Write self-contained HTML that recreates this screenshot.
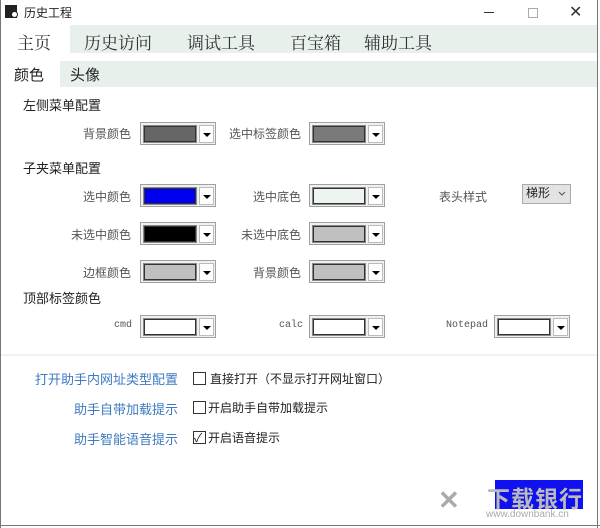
<!DOCTYPE html>
<html><head><meta charset="utf-8"><style>
*{margin:0;padding:0;box-sizing:border-box}
body{width:600px;height:528px;background:#fff;font-family:"Liberation Sans","Noto Sans CJK SC",sans-serif;position:relative;overflow:hidden;color:#222}
.a{position:absolute;white-space:nowrap}
.tb{font-family:"Noto Serif CJK SC","Liberation Serif",serif;font-size:17px;color:#333}
.lbl{font-size:12px;color:#555;text-align:right}
.cb{position:absolute;width:76px;height:23px;border:1px solid #a0a0a0;background:#f0f0f0}
.cb .sw{position:absolute;left:3px;top:3px;width:52px;height:16px;border:1px solid #333;outline:1px solid #888}
.cb .ar{position:absolute;left:58px;top:2px;width:15px;height:18px;background:#fff;border:1px solid #bbb}
.cb .ar:after{content:"";position:absolute;left:3px;top:7px;border-left:4px solid transparent;border-right:4px solid transparent;border-top:4px solid #000}
.sec{font-size:13px;color:#222}
.blue{font-size:13px;color:#3d7ac0;text-align:right;width:170px}
.chk{position:absolute;width:13px;height:13px;border:1px solid #333;background:#fff}
.mono{font-family:"Liberation Mono",monospace;font-size:10px;color:#555}
</style></head><body>
<div class="a" style="left:0;top:0;width:1px;height:528px;background:#777"></div>
<div class="a" style="left:597px;top:0;width:1px;height:528px;background:#777"></div>
<div class="a" style="left:0;top:525px;width:600px;height:1px;background:#777"></div>
<div class="a" style="left:5px;top:5px;width:12px;height:13px;background:#222"></div>
<div class="a" style="left:11px;top:11px;width:7px;height:7px;border-radius:50%;background:#fff;border:1.5px solid #222"></div>
<div class="a" style="left:24px;top:4px;font-size:12px;color:#222">历史工程</div>
<div class="a" style="left:484px;top:12px;width:10px;height:1px;background:#333"></div>
<div class="a" style="left:528px;top:8px;width:10px;height:10px;border:1px solid #aaa"></div>
<div class="a" style="left:569px;top:2px;font-size:16px;color:#333">✕</div>
<div class="a" style="left:1px;top:25px;width:596px;height:28px;background:#e8f0ec"></div>
<div class="a" style="left:1px;top:25px;width:69px;height:28px;background:#fff"></div>
<div class="a tb" style="left:17px;top:29px">主页</div>
<div class="a tb" style="left:84px;top:29px">历史访问</div>
<div class="a tb" style="left:187px;top:29px">调试工具</div>
<div class="a tb" style="left:290px;top:29px">百宝箱</div>
<div class="a tb" style="left:364px;top:29px">辅助工具</div>
<div class="a" style="left:1px;top:61px;width:596px;height:26px;background:#e8f0ec"></div>
<div class="a" style="left:1px;top:61px;width:59px;height:26px;background:#fff"></div>
<div class="a" style="left:14px;top:64px;font-size:15px;color:#222">颜色</div>
<div class="a" style="left:70px;top:64px;font-size:15px;color:#222">头像</div>
<div class="a sec" style="left:23px;top:95px">左侧菜单配置</div>
<div class="a sec" style="left:23px;top:158px">子夹菜单配置</div>
<div class="a sec" style="left:23px;top:288px">顶部标签颜色</div>

<div class="a lbl" style="left:30px;width:101px;top:125px">背景颜色</div>
<div class="cb" style="left:140px;top:122px"><div class="sw" style="background:#666"></div><div class="ar"></div></div>
<div class="a lbl" style="left:200px;width:101px;top:125px">选中标签颜色</div>
<div class="cb" style="left:309px;top:122px"><div class="sw" style="background:#7a7a7a"></div><div class="ar"></div></div>

<div class="a lbl" style="left:30px;width:101px;top:188px">选中颜色</div>
<div class="cb" style="left:140px;top:184px"><div class="sw" style="background:#0000f0"></div><div class="ar"></div></div>
<div class="a lbl" style="left:200px;width:101px;top:188px">选中底色</div>
<div class="cb" style="left:309px;top:184px"><div class="sw" style="background:#eef5f1"></div><div class="ar"></div></div>
<div class="a lbl" style="left:430px;width:57px;top:188px">表头样式</div>
<div class="a" style="left:522px;top:184px;width:49px;height:20px;background:#e3e3e3;border:1px solid #aaa;font-size:12px;padding-left:3px;line-height:17px">梯形</div>
<svg class="a" style="left:558px;top:191px" width="8" height="6"><path d="M1 1 L4 4 L7 1" fill="none" stroke="#555" stroke-width="1"/></svg>

<div class="a lbl" style="left:30px;width:101px;top:226px">未选中颜色</div>
<div class="cb" style="left:140px;top:222px"><div class="sw" style="background:#000"></div><div class="ar"></div></div>
<div class="a lbl" style="left:200px;width:101px;top:226px">未选中底色</div>
<div class="cb" style="left:309px;top:222px"><div class="sw" style="background:#c0c0c0"></div><div class="ar"></div></div>

<div class="a lbl" style="left:30px;width:101px;top:264px">边框颜色</div>
<div class="cb" style="left:140px;top:260px"><div class="sw" style="background:#c0c0c0"></div><div class="ar"></div></div>
<div class="a lbl" style="left:200px;width:101px;top:264px">背景颜色</div>
<div class="cb" style="left:309px;top:260px"><div class="sw" style="background:#c0c0c0"></div><div class="ar"></div></div>

<div class="a mono" style="left:114px;top:320px">cmd</div>
<div class="cb" style="left:140px;top:315px"><div class="sw" style="background:#fff"></div><div class="ar"></div></div>
<div class="a mono" style="left:279px;top:320px">calc</div>
<div class="cb" style="left:309px;top:315px"><div class="sw" style="background:#fff"></div><div class="ar"></div></div>
<div class="a mono" style="left:446px;top:320px">Notepad</div>
<div class="cb" style="left:494px;top:315px"><div class="sw" style="background:#fff"></div><div class="ar"></div></div>

<div class="a" style="left:1px;top:354px;width:596px;height:2px;background:#eef2f0"></div>
<div class="a blue" style="left:8px;top:369px">打开助手内网址类型配置</div>
<div class="a blue" style="left:8px;top:399px">助手自带加载提示</div>
<div class="a blue" style="left:8px;top:429px">助手智能语音提示</div>
<div class="chk" style="left:193px;top:372px"></div>
<div class="chk" style="left:193px;top:401px"></div>
<div class="chk" style="left:193px;top:431px"><span style="position:absolute;left:0;top:-3px;font-size:12px">✓</span></div>
<div class="a" style="left:210px;top:370px;font-size:12px">直接打开（不显示打开网址窗口）</div>
<div class="a" style="left:208px;top:399px;font-size:12px">开启助手自带加载提示</div>
<div class="a" style="left:208px;top:429px;font-size:12px">开启语音提示</div>

<div class="a" style="left:495px;top:480px;width:88px;height:29px;background:#1010f0"></div>
<div class="a" style="left:438px;top:485px;font-size:26px;color:#aaa;font-weight:bold">✕</div>
<div class="a" style="left:487px;top:480px;font-size:23px;color:#bbb;font-weight:bold;letter-spacing:1px">下载银行</div>
<div class="a" style="left:486px;top:509px;font-size:10px;color:#aaa">www.downbank.cn</div>
</body></html>
